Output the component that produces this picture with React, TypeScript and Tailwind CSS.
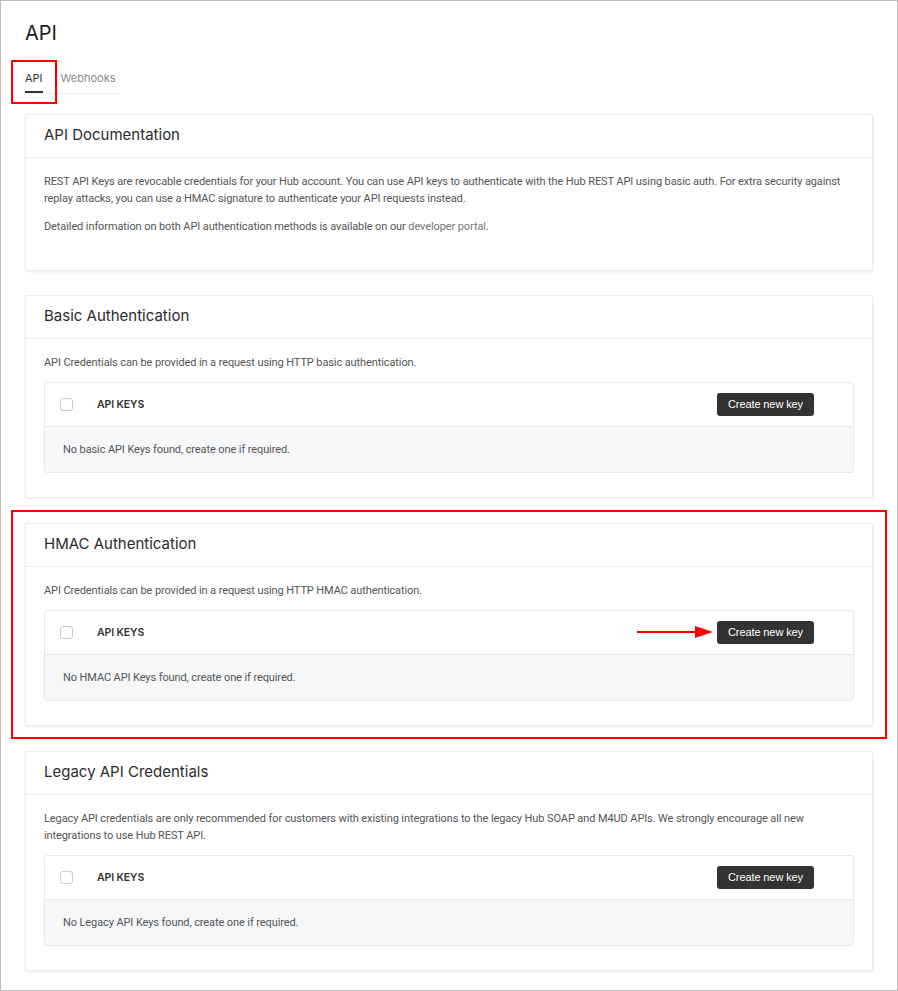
import React from 'react';

const FONT = "font-['Inter','Liberation_Sans',sans-serif]";
const BODY = "font-['Roboto','Liberation_Sans',sans-serif] tracking-[-0.1px]";

const Arrow = () => (
  <svg width="76" height="12" viewBox="0 0 76 12" className="mr-[4px]">
    <line x1="0" y1="6" x2="60" y2="6" stroke="#ff0000" strokeWidth="2" />
    <polygon points="58,0 76,6 58,12" fill="#ff0000" />
  </svg>
);

interface KeyTableProps {
  empty: string;
  arrow?: boolean;
}

const KeyTable = ({ empty, arrow }: KeyTableProps) => (
  <div className="rounded-[3px] border border-[#e6e8ee]">
    <div className="flex h-[44px] items-center border-b border-[#e6e8ee] pl-[15px] pr-[39px]">
      <span className="h-[13px] w-[13px] rounded-[3px] border border-[#c9ccd2] bg-white" />
      <span className={`${FONT} ml-[24px] text-[10.5px] font-semibold text-[#333]`}>API KEYS</span>
      <div className="ml-auto flex items-center">
        {arrow && <Arrow />}
        <button className="h-[23px] w-[97px] rounded-[3px] bg-[#333] font-['Liberation_Sans',sans-serif] text-[11px] text-white">
          Create new key
        </button>
      </div>
    </div>
    <div className={`${BODY} flex h-[45px] items-center bg-[#f6f7f9] px-[18px] text-[11px] text-[#555]`}>
      {empty}
    </div>
  </div>
);

interface CardProps {
  title: string;
  children: React.ReactNode;
}

const Card = ({ title, children }: CardProps) => (
  <div className="rounded-[2px] border border-[#ececec] bg-white shadow-[0_1px_3px_rgba(0,0,0,0.08)]">
    <div className="flex h-[43px] items-center border-b border-[#ececec] px-[18px] text-[15px] text-[#2b2b2b]">
      {title}
    </div>
    <div className={`${BODY} px-[18px] pb-[24px] pt-[15px] text-[11px] leading-[17px] text-[#555]`}>{children}</div>
  </div>
);

export default function App() {
  return (
    <div className={`${FONT} h-[991px] w-[898px] border border-[#bdbdbd] bg-white`}>
      <div className="px-[24px] pt-[20px]">
        <h1 className="text-[20px] leading-[24px] text-[#222]">API</h1>

        {/* tabs */}
        <div className="relative mt-[25px] flex w-[95px] gap-[18px] border-b border-[#ececec] text-[11px]">
          <div className="border-b-2 border-[#2e3440] pb-[4px] text-[#333]">API</div>
          <div className="pb-[4px] text-[#888]">Webhooks</div>
          <div className="absolute left-[-14px] top-[-10px] h-[44px] w-[46px] border-2 border-[#ff0000]" />
        </div>

        <div className="mt-[20px] flex flex-col gap-[24px]">
          <Card title="API Documentation">
            <p>
              REST API Keys are revocable credentials for your Hub account. You can use API keys to authenticate
              with the Hub REST API using basic auth. For extra security against replay attacks, you can use a HMAC
              signature to authenticate your API requests instead.
            </p>
            <p className="mb-[11px] mt-[11px]">
              Detailed information on both API authentication methods is available on our{' '}
              <span className="text-[#777]">developer portal</span>.
            </p>
          </Card>

          <Card title="Basic Authentication">
            <p className="mb-[11px]">API Credentials can be provided in a request using HTTP basic authentication.</p>
            <KeyTable empty="No basic API Keys found, create one if required." />
          </Card>

          <div className="-mx-[14px] -my-[12px] border-2 border-[#ff0000] px-[12px] py-[11px]">
            <Card title="HMAC Authentication">
              <p className="mb-[11px]">API Credentials can be provided in a request using HTTP HMAC authentication.</p>
              <KeyTable empty="No HMAC API Keys found, create one if required." arrow />
            </Card>
          </div>

          <Card title="Legacy API Credentials">
            <p className="mb-[11px]">
              Legacy API credentials are only recommended for customers with existing integrations to the legacy Hub
              SOAP and M4UD APIs. We strongly encourage all new integrations to use Hub REST API.
            </p>
            <KeyTable empty="No Legacy API Keys found, create one if required." />
          </Card>
        </div>
      </div>
    </div>
  );
}
